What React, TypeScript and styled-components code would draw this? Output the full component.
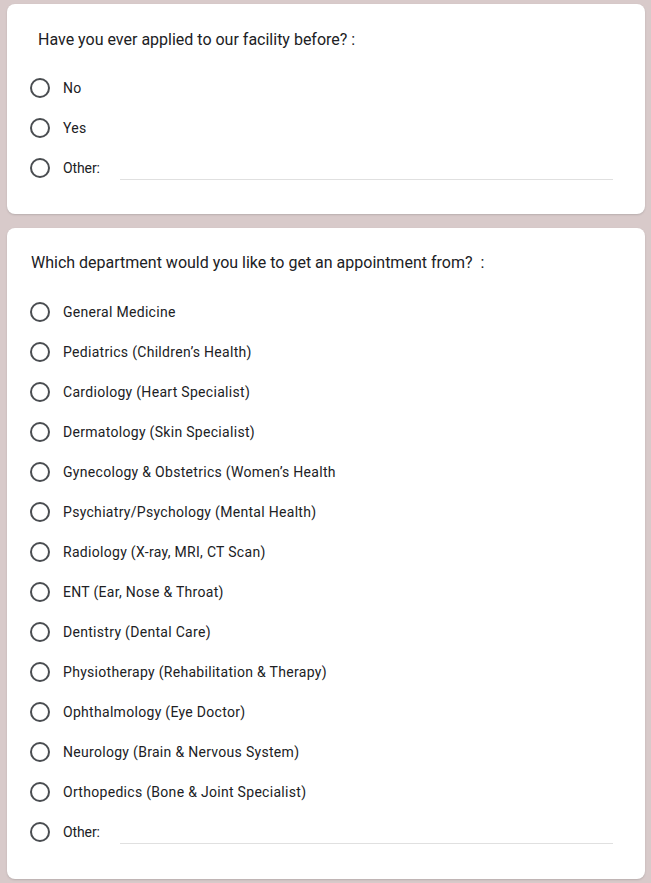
import styled, { createGlobalStyle } from 'styled-components';

const GlobalStyle = createGlobalStyle`
  html, body {
    margin: 0;
    padding: 0;
    background-color: #d8caca;
  }
  body {
    font-family: Roboto, "Liberation Sans", Arial, sans-serif;
  }
`

const Page = styled.div`
  display: flex;
  flex-direction: column;
  gap: 14px;
  padding: 4px 6px 4px 7px;
`

const Card = styled.section<{ $top: number; $bottom: number }>`
  background-color: #FFFFFF;
  border-radius: 8px;
  box-shadow: 0 1px 2px rgba(60, 64, 67, 0.2);
  padding: ${({ $top, $bottom }) => `${$top}px 32px ${$bottom}px 23px`};
  display: flex;
  flex-direction: column;
`

const Question = styled.div<{ $indent: number; $gap: number }>`
  font-size: 16px;
  line-height: 24px;
  color: #202124;
  padding-left: ${({ $indent }) => $indent}px;
  margin-bottom: ${({ $gap }) => $gap}px;
  white-space: pre;
`

const OptionRow = styled.label`
  display: flex;
  align-items: center;
  height: 40px;
`

const Radio = styled.span`
  width: 20px;
  height: 20px;
  box-sizing: border-box;
  border: 2px solid #4a4d51;
  border-radius: 50%;
  flex-shrink: 0;
  margin-right: 13px;
`

const OptionText = styled.span`
  font-size: 14px;
  letter-spacing: 0.3px;
  color: #202124;
`

const OtherLabel = styled.span`
  font-size: 14px;
  letter-spacing: -0.1px;
  color: #202124;
  width: 57px;
  flex-shrink: 0;
`

const OtherLine = styled.span`
  flex: 1;
  align-self: flex-end;
  margin-bottom: 8px;
  height: 1px;
  background-color: #e0e0e0;
`

const applied = ['No', 'Yes']

const departments = [
  'General Medicine',
  'Pediatrics (Children’s Health)',
  'Cardiology (Heart Specialist)',
  'Dermatology (Skin Specialist)',
  'Gynecology & Obstetrics (Women’s Health',
  'Psychiatry/Psychology (Mental Health)',
  'Radiology (X-ray, MRI, CT Scan)',
  'ENT (Ear, Nose & Throat)',
  'Dentistry (Dental Care)',
  'Physiotherapy (Rehabilitation & Therapy)',
  'Ophthalmology (Eye Doctor)',
  'Neurology (Brain & Nervous System)',
  'Orthopedics (Bone & Joint Specialist)',
]

const Option = ({ text }: { text: string }) => (
  <OptionRow>
    <Radio />
    <OptionText>{text}</OptionText>
  </OptionRow>
)

const OtherOption = () => (
  <OptionRow>
    <Radio />
    <OtherLabel>Other:</OtherLabel>
    <OtherLine />
  </OptionRow>
)

const App = () => {
  return (
    <>
      <GlobalStyle />
      <Page>
        <Card $top={24} $bottom={26}>
          <Question $indent={8} $gap={16}>Have you ever applied to our facility before? :</Question>
          {applied.map((a) => <Option key={a} text={a} />)}
          <OtherOption />
        </Card>
        <Card $top={23} $bottom={27}>
          <Question $indent={1} $gap={17}>Which department would you like to get an appointment from?  :</Question>
          {departments.map((d) => <Option key={d} text={d} />)}
          <OtherOption />
        </Card>
      </Page>
    </>
  )
}

export default App
